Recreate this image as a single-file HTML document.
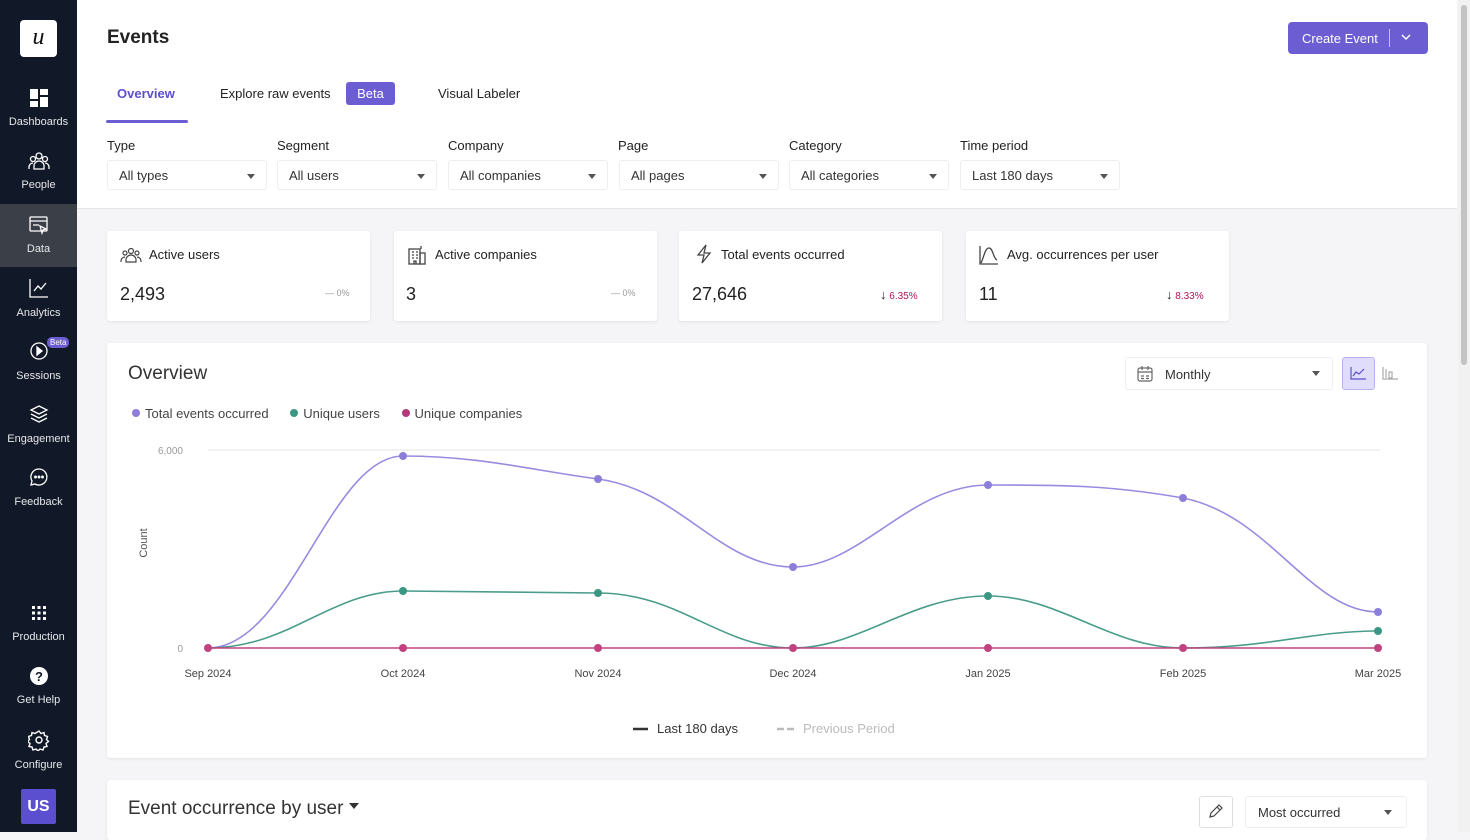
<!DOCTYPE html>
<html><head><meta charset="utf-8"><style>
*{box-sizing:border-box;margin:0;padding:0}
body{width:1470px;height:832px;overflow:hidden;font-family:"Liberation Sans",sans-serif;background:#f5f5f7;position:relative;color:#222}
.sb{position:absolute;left:0;top:0;width:77px;height:832px;background:#111827}
.logo{position:absolute;left:20px;top:20px;width:37px;height:37px;background:#fff;border-radius:4px;font-family:"Liberation Serif",serif;font-style:italic;font-size:24px;text-align:center;line-height:34px;color:#111}
.ni{position:absolute;left:0;width:77px;height:63px;text-align:center;color:#e5e7eb;font-size:11px}
.ni svg{display:block;margin:0 auto 8px}
.top{position:absolute;left:77px;top:0;width:1380px;height:209px;background:#fff;border-bottom:1px solid #e5e5e5}
.abs{position:absolute}
.card{position:absolute;background:#fff;border-radius:3px;box-shadow:0 1px 3px rgba(0,0,0,.08)}
.sel{position:absolute;top:160px;height:30px;border:1px solid #eee;border-radius:3px;font-size:13px;color:#333;padding:7px 11px}
.sel:after{content:"";position:absolute;right:11px;top:13px;border:4px solid transparent;border-top:5px solid #555}
.lbl{position:absolute;top:138px;font-size:13px;color:#222}
.dot{display:inline-block;width:8px;height:8px;border-radius:50%;margin-right:5px;vertical-align:1px}
</style></head><body>
<div class="sb">
 <div class="logo">u</div>
 <div class="ni" style="top:88px"><svg width="20" height="20" viewBox="0 0 20 20"><rect x="1" y="1" width="8" height="10" fill="#fff"/><rect x="11" y="1" width="8" height="6" fill="#fff"/><rect x="1" y="13" width="8" height="6" fill="#fff"/><rect x="11" y="9" width="8" height="10" fill="#fff"/></svg>Dashboards</div>
 <div class="ni" style="top:151px"><svg width="22" height="20" viewBox="0 0 22 20" fill="none" stroke="#fff" stroke-width="1.3"><circle cx="11" cy="5" r="3"/><circle cx="5" cy="8" r="2.5"/><circle cx="17" cy="8" r="2.5"/><path d="M6 18v-3a5 5 0 0 1 10 0v3zM1 18v-2a4 4 0 0 1 4-4M21 18v-2a4 4 0 0 0-4-4"/></svg>People</div>
 <div class="ni" style="top:204px;height:63px;background:#3b3f47;padding-top:11px"><svg width="22" height="20" viewBox="0 0 22 20" fill="none" stroke="#fff" stroke-width="1.3"><rect x="2" y="2" width="17" height="14" rx="1"/><path d="M2 6h17M5 10h6M12 11l6 3-3 1-1 3z"/></svg>Data</div>
 <div class="ni" style="top:277px"><svg width="22" height="22" viewBox="0 0 22 22" fill="none" stroke="#fff" stroke-width="1.3"><path d="M2 2v18h18M6 14l4-5 3 3 5-6"/></svg>Analytics</div>
 <div class="ni" style="top:340px"><svg width="22" height="22" viewBox="0 0 22 22" fill="none" stroke="#fff" stroke-width="1.3"><circle cx="11" cy="11" r="8"/><path d="M9 7l5 4-5 4z" fill="#fff"/></svg>Sessions<span style="position:absolute;left:47px;top:-3px;background:#6d5dd3;color:#fff;font-size:8px;padding:1px 3px;border-radius:5px">Beta</span></div>
 <div class="ni" style="top:403px"><svg width="22" height="22" viewBox="0 0 22 22" fill="none" stroke="#fff" stroke-width="1.3"><path d="M11 3l8 4-8 4-8-4zM3 11l8 4 8-4M3 15l8 4 8-4"/></svg>Engagement</div>
 <div class="ni" style="top:466px"><svg width="22" height="22" viewBox="0 0 22 22" fill="none" stroke="#fff" stroke-width="1.3"><path d="M11 3a8 8 0 1 1-4 15l-4 1 1-4A8 8 0 0 1 11 3z"/><circle cx="7.5" cy="11" r=".8" fill="#fff"/><circle cx="11" cy="11" r=".8" fill="#fff"/><circle cx="14.5" cy="11" r=".8" fill="#fff"/></svg>Feedback</div>
 <div class="ni" style="top:603px"><svg width="20" height="20" viewBox="0 0 20 20" fill="#fff"><rect x="3" y="3" width="3" height="3"/><rect x="8.5" y="3" width="3" height="3"/><rect x="14" y="3" width="3" height="3"/><rect x="3" y="8.5" width="3" height="3"/><rect x="8.5" y="8.5" width="3" height="3"/><rect x="14" y="8.5" width="3" height="3"/><rect x="3" y="14" width="3" height="3"/><rect x="8.5" y="14" width="3" height="3"/><rect x="14" y="14" width="3" height="3"/></svg>Production</div>
 <div class="ni" style="top:666px"><svg width="20" height="20" viewBox="0 0 20 20"><circle cx="10" cy="10" r="9" fill="#fff"/><text x="10" y="15" text-anchor="middle" font-size="13" font-weight="bold" fill="#111827" font-family="Liberation Sans">?</text></svg>Get Help</div>
 <div class="ni" style="top:729px"><svg width="22" height="22" viewBox="0 0 22 22" fill="none" stroke="#fff" stroke-width="1.4"><circle cx="11" cy="11" r="3"/><path d="M11 2l2 2.5 3-1 .5 3 3 1-1 3 2 2-2.5 2 1 3-3 .5-1 3-3-1-2 2-2-2-3 1-1-3-3-.5 1-3-2.5-2 2-2-1-3 3-1 .5-3 3 1z"/></svg>Configure</div>
 <div class="abs" style="left:21px;top:789px;width:35px;height:35px;background:#5b4fcf;color:#fff;font-weight:bold;font-size:16px;text-align:center;line-height:35px;border-radius:2px">US</div>
</div>
<div class="top"></div>
<div class="abs" style="left:107px;top:27px;font-size:19px;font-weight:bold">Events</div>
<div class="abs" style="left:1288px;top:22px;width:140px;height:32px;background:#6d5dd3;border-radius:4px;color:#fff;font-size:13px;padding:9px 14px">Create Event <span style="position:absolute;left:101px;top:7px;width:1px;height:18px;background:#c8c0f3"></span><svg style="position:absolute;left:113px;top:12px" width="10" height="7" viewBox="0 0 10 7" fill="none" stroke="#fff" stroke-width="1.5"><path d="M1 1l4 4 4-4"/></svg></div>
<div class="abs" style="left:117px;top:86px;font-size:13px;color:#5b4fcf;font-weight:bold">Overview</div>
<div class="abs" style="left:106px;top:120px;width:82px;height:3px;background:#6d5dd3;border-radius:2px"></div>
<div class="abs" style="left:220px;top:86px;font-size:13px;color:#222">Explore raw events</div>
<div class="abs" style="left:346px;top:82px;width:49px;height:23px;background:#6d5dd3;color:#fff;font-size:13px;text-align:center;line-height:23px;border-radius:3px">Beta</div>
<div class="abs" style="left:438px;top:86px;font-size:13px;color:#222">Visual Labeler</div>
<div class="lbl" style="left:107px">Type</div><div class="sel" style="left:107px;width:160px">All types</div>
<div class="lbl" style="left:277px">Segment</div><div class="sel" style="left:277px;width:160px">All users</div>
<div class="lbl" style="left:448px">Company</div><div class="sel" style="left:448px;width:160px">All companies</div>
<div class="lbl" style="left:618px">Page</div><div class="sel" style="left:619px;width:160px">All pages</div>
<div class="lbl" style="left:789px">Category</div><div class="sel" style="left:789px;width:160px">All categories</div>
<div class="lbl" style="left:960px">Time period</div><div class="sel" style="left:960px;width:160px">Last 180 days</div>

<div class="card" style="left:107px;top:231px;width:263px;height:90px"></div>
<div class="card" style="left:394px;top:231px;width:263px;height:90px"></div>
<div class="card" style="left:679px;top:231px;width:263px;height:90px"></div>
<div class="card" style="left:966px;top:231px;width:263px;height:90px"></div>
<svg class="abs" style="left:120px;top:247px" width="22" height="16" viewBox="0 0 22 16" fill="none" stroke="#444" stroke-width="1.2"><circle cx="11" cy="4" r="2.5"/><circle cx="5" cy="6" r="2"/><circle cx="17" cy="6" r="2"/><path d="M6 15v-2a5 5 0 0 1 10 0v2zM1 15v-1a4 4 0 0 1 4-4M21 15v-1a4 4 0 0 0-4-4"/></svg>
<div class="abs" style="left:149px;top:247px;font-size:13px">Active users</div>
<div class="abs" style="left:120px;top:284px;font-size:18px">2,493</div>
<div class="abs" style="left:325px;top:288px;font-size:9px;color:#999">— 0%</div>
<svg class="abs" style="left:407px;top:245px" width="20" height="20" viewBox="0 0 20 20" fill="none" stroke="#444" stroke-width="1.3"><rect x="2" y="4" width="11" height="15"/><rect x="13" y="8" width="5" height="11"/><path d="M5 7h2M9 7h2M5 10h2M9 10h2M5 13h2M9 13h2M7 19v-3h2v3M14 1v3"/></svg>
<div class="abs" style="left:435px;top:247px;font-size:13px">Active companies</div>
<div class="abs" style="left:406px;top:284px;font-size:18px">3</div>
<div class="abs" style="left:611px;top:288px;font-size:9px;color:#999">— 0%</div>
<svg class="abs" style="left:695px;top:244px" width="18" height="20" viewBox="0 0 18 20" fill="none" stroke="#444" stroke-width="1.3"><path d="M11 1L3 11h6l-2 8 8-10H9z"/></svg>
<div class="abs" style="left:721px;top:247px;font-size:13px">Total events occurred</div>
<div class="abs" style="left:692px;top:284px;font-size:18px">27,646</div>
<div class="abs" style="left:880px;top:287px;font-size:10px;color:#b0155a"><b style="color:#222;font-size:13px">↓</b> 6.35%</div>
<svg class="abs" style="left:979px;top:245px" width="20" height="20" viewBox="0 0 20 20" fill="none" stroke="#444" stroke-width="1.3"><path d="M1 1v18h18M2 18c3-6 4-15 8-15s4 10 8 12"/></svg>
<div class="abs" style="left:1007px;top:247px;font-size:13px">Avg. occurrences per user</div>
<div class="abs" style="left:979px;top:284px;font-size:18px">11</div>
<div class="abs" style="left:1166px;top:287px;font-size:10px;color:#b0155a"><b style="color:#222;font-size:13px">↓</b> 8.33%</div>

<div class="card" style="left:107px;top:343px;width:1320px;height:415px"></div>
<div class="abs" style="left:128px;top:363px;font-size:19px;color:#333">Overview</div>
<div class="abs" style="left:1125px;top:357px;width:208px;height:33px;border:1px solid #eee;border-radius:3px"></div>
<svg class="abs" style="left:1136px;top:365px" width="18" height="18" viewBox="0 0 18 18" fill="none" stroke="#666" stroke-width="1.2"><rect x="2" y="3" width="14" height="13" rx="2"/><path d="M2 7h14M6 1v4M12 1v4M5 11h3M10 11h3M5 13.5h3M10 13.5h3"/></svg>
<div class="abs" style="left:1165px;top:367px;font-size:13px;color:#333">Monthly</div>
<div class="abs" style="left:1312px;top:371px;border:4px solid transparent;border-top:5px solid #555"></div>
<div class="abs" style="left:1342px;top:357px;width:33px;height:33px;background:#e0dcfb;border:1px solid #b9b0f0;border-radius:3px"></div>
<svg class="abs" style="left:1350px;top:366px" width="16" height="14" viewBox="0 0 16 14" fill="none" stroke="#5b4fcf" stroke-width="1.2"><path d="M1 1v12h15M3 10l3-4 3 2 5-5"/></svg>
<svg class="abs" style="left:1382px;top:366px" width="16" height="14" viewBox="0 0 16 14" fill="none" stroke="#aaa" stroke-width="1.2"><path d="M1 1v12h15M4 3v9M7 6v6h3V6z"/></svg>
<div class="abs" style="left:132px;top:406px;font-size:13px;color:#444"><span class="dot" style="background:#8c7fd9"></span>Total events occurred &nbsp;&nbsp;&nbsp;&nbsp; <span class="dot" style="background:#3b9683"></span>Unique users &nbsp;&nbsp;&nbsp;&nbsp; <span class="dot" style="background:#b2397a"></span>Unique companies</div>
<svg class="abs" style="left:107px;top:430px" width="1320" height="320" viewBox="107 430 1320 320" font-family="Liberation Sans">
<line x1="208" y1="450" x2="1380" y2="450" stroke="#e6e6e6"/>
<line x1="208" y1="648" x2="1380" y2="648" stroke="#e6e6e6"/>
<text x="183" y="454" font-size="10" fill="#999" text-anchor="end">6,000</text>
<text x="183" y="652" font-size="10" fill="#999" text-anchor="end">0</text>
<text transform="translate(147,543) rotate(-90)" font-size="11" fill="#555" text-anchor="middle">Count</text>
<g font-size="11" fill="#444" text-anchor="middle"><text x="208" y="677">Sep 2024</text><text x="403" y="677">Oct 2024</text><text x="598" y="677">Nov 2024</text><text x="793" y="677">Dec 2024</text><text x="988" y="677">Jan 2025</text><text x="1183" y="677">Feb 2025</text><text x="1378" y="677">Mar 2025</text></g>
<path d="M208 648C290 648 330 456 403 456C480 456 530 470 598 479C680 490 720 567 793 567C860 567 910 485 988 485C1060 485 1110 485 1183 498C1270 515 1310 612 1378 612" fill="none" stroke="#9a8ae0" stroke-width="1.6"/>
<path d="M208 648C290 648 330 591 403 591L598 593C680 593 720 648 793 648C860 648 910 596 988 596C1060 596 1110 648 1183 648C1270 648 1310 631 1378 631" fill="none" stroke="#4a9d8a" stroke-width="1.6"/>
<line x1="208" y1="648" x2="1378" y2="648" stroke="#c0427f" stroke-width="1.6"/>
<g fill="#8c7fd9"><circle cx="403" cy="456" r="4"/><circle cx="598" cy="479" r="4"/><circle cx="793" cy="567" r="4"/><circle cx="988" cy="485" r="4"/><circle cx="1183" cy="498" r="4"/><circle cx="1378" cy="612" r="4"/></g>
<g fill="#3b9683"><circle cx="403" cy="591" r="4"/><circle cx="598" cy="593" r="4"/><circle cx="988" cy="596" r="4"/><circle cx="1378" cy="631" r="4"/></g>
<g fill="#c0427f"><circle cx="208" cy="648" r="4"/><circle cx="403" cy="648" r="4"/><circle cx="598" cy="648" r="4"/><circle cx="793" cy="648" r="4"/><circle cx="988" cy="648" r="4"/><circle cx="1183" cy="648" r="4"/><circle cx="1378" cy="648" r="4"/></g>
<line x1="633" y1="729" x2="648" y2="729" stroke="#333" stroke-width="2.5"/>
<text x="657" y="733" font-size="13" fill="#333">Last 180 days</text>
<line x1="777" y1="729" x2="796" y2="729" stroke="#bbb" stroke-width="2.5" stroke-dasharray="7 3"/>
<text x="803" y="733" font-size="13" fill="#bbb">Previous Period</text>
</svg>
<div class="card" style="left:107px;top:780px;width:1320px;height:60px"></div>
<div class="abs" style="left:128px;top:798px;font-size:19px;color:#333">Event occurrence by user <span style="display:inline-block;border:5px solid transparent;border-top:6px solid #333;vertical-align:middle"></span></div>
<div class="abs" style="left:1199px;top:796px;width:34px;height:32px;border:1px solid #ddd;border-radius:3px"></div>
<svg class="abs" style="left:1208px;top:803px" width="16" height="16" viewBox="0 0 16 16" fill="none" stroke="#444" stroke-width="1.2"><path d="M2 14l1-4 8-8 3 3-8 8zM9 4l3 3"/></svg>
<div class="abs" style="left:1245px;top:796px;width:162px;height:32px;border:1px solid #eee;border-radius:3px;font-size:13px;padding:8px 12px;color:#333">Most occurred<span style="position:absolute;right:14px;top:13px;border:4px solid transparent;border-top:5px solid #555"></span></div>
<div class="abs" style="left:1458px;top:0;width:12px;height:832px;background:#f1f1f1"></div>
<div class="abs" style="left:1461px;top:5px;width:6px;height:360px;background:#c4c4c4;border-radius:3px"></div>
</body></html>
